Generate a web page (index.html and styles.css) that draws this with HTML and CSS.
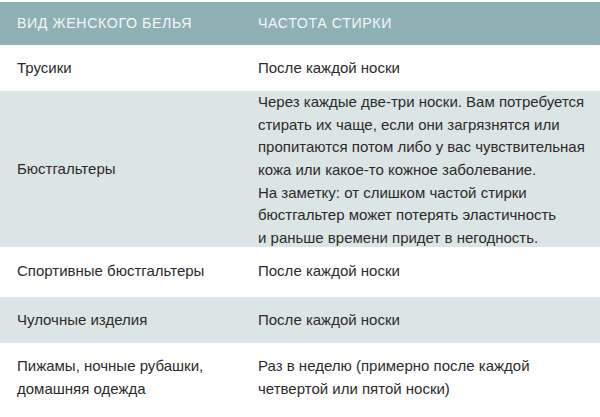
FILE: index.html
```html
<!DOCTYPE html>
<html lang="ru">
<head>
<meta charset="utf-8">
<link rel="stylesheet" href="styles.css">
</head>
<body>
<div class="sheet">
  <div class="row head">
    <div class="c1">Вид женского белья</div>
    <div class="c2">Частота стирки</div>
  </div>
  <div class="row">
    <div class="c1">Трусики</div>
    <div class="c2">После каждой носки</div>
  </div>
  <div class="row alt tall">
    <div class="c1">Бюстгальтеры</div>
    <div class="c2">Через каждые две-три носки. Вам потребуется<br>стирать их чаще, если они загрязнятся или<br>пропитаются потом либо у вас чувствительная<br>кожа или какое-то кожное заболевание.<br>На заметку: от слишком частой стирки<br>бюстгальтер может потерять эластичность<br>и раньше времени придет в негодность.</div>
  </div>
  <div class="row r3">
    <div class="c1">Спортивные бюстгальтеры</div>
    <div class="c2">После каждой носки</div>
  </div>
  <div class="row alt">
    <div class="c1">Чулочные изделия</div>
    <div class="c2">После каждой носки</div>
  </div>
  <div class="row">
    <div class="c1">Пижамы, ночные рубашки,<br>домашняя одежда</div>
    <div class="c2">Раз в неделю (примерно после каждой<br>четвертой или пятой носки)</div>
  </div>
</div>
</body>
</html>
```
FILE: styles.css
```css
html, body {
  margin: 0;
  padding: 0;
  background: #ffffff;
}
body {
  font-family: "Liberation Sans", Arial, sans-serif;
  font-size: 15px;
  color: #2b2b2b;
  padding-top: 2px;
}
.sheet {
  width: 600px;
}
.row {
  display: grid;
  grid-template-columns: 241px 1fr;
  align-items: center;
  padding: 12px 0;
  line-height: 22.6px;
}
.c1 {
  padding-left: 17px;
}
.c2 {
  padding-left: 17px;
  white-space: nowrap;
}
.head {
  background: #8fb0b4;
  color: #f4f7f7;
  text-transform: uppercase;
  letter-spacing: 0.6px;
  font-size: 14.2px;
  padding: 10px 0;
}
.alt {
  background: #dce5e5;
}
.tall {
  padding: 0;
  height: 156px;
}
.tall .c2 {
  margin: 0 0 -2px;
}
.r3 {
  padding: 13px 0 14px;
}
```
